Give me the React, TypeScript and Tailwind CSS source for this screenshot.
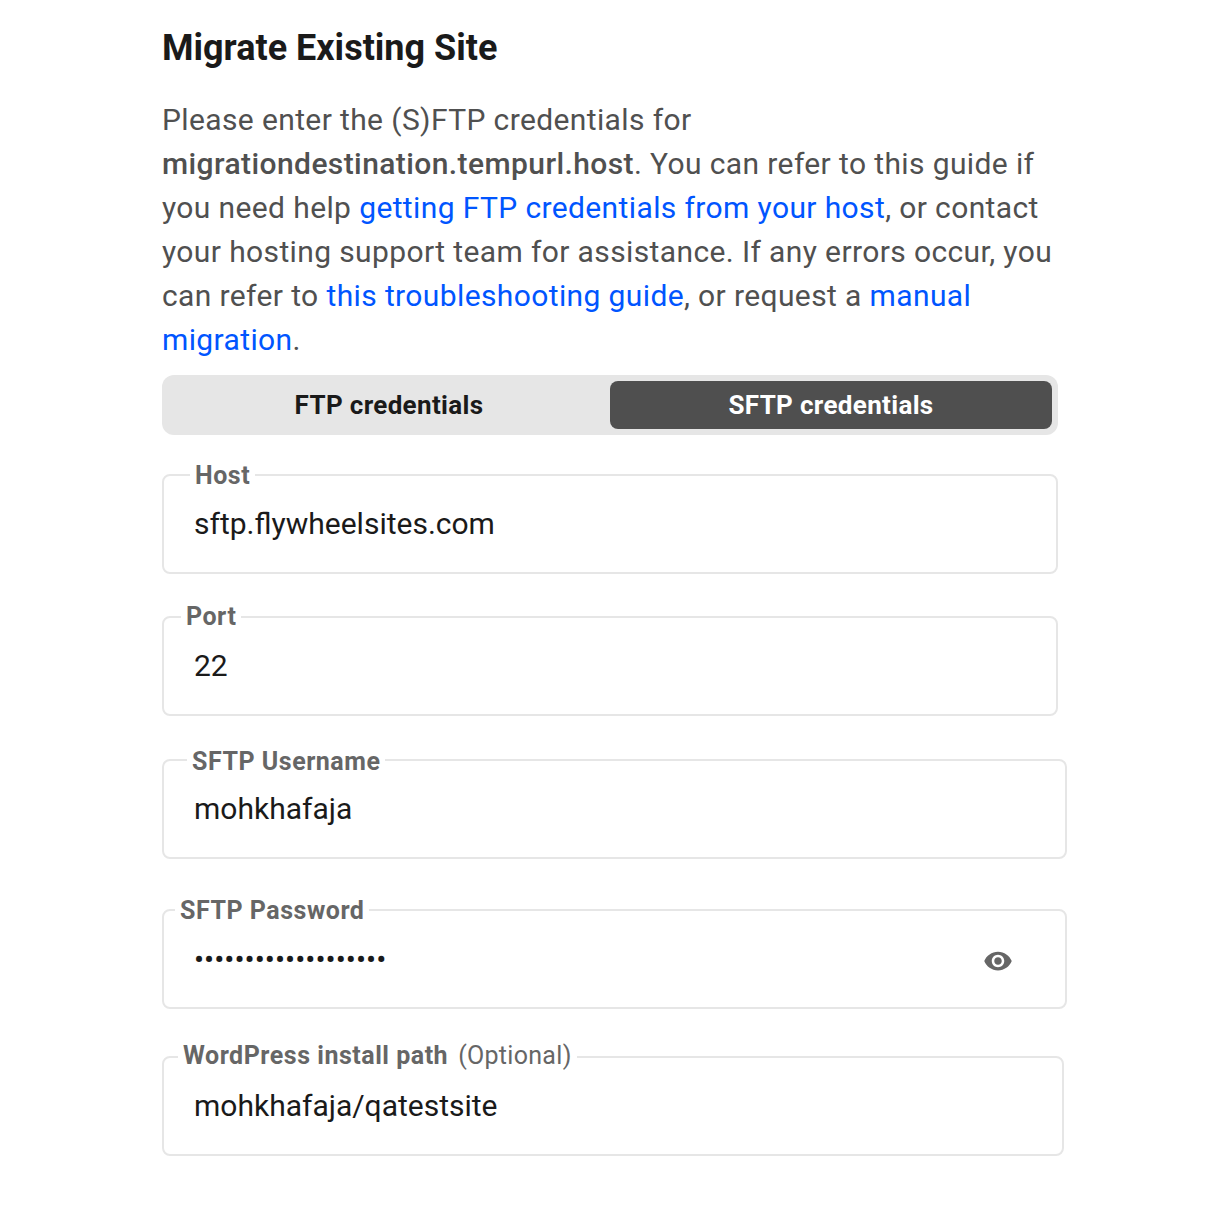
type CampoProps = {
  label: string;
  value: string;
  largura: string;
  recuo: string;
  topo: string;
  ajuste?: string;
  opcional?: boolean;
  senha?: boolean;
};

function Campo({ label, value, largura, recuo, topo, ajuste = "", opcional, senha }: CampoProps) {
  return (
    <fieldset className={`${largura} ${topo} h-[113px] border-2 border-[#e6e6e6] rounded-lg flex items-start`}>
      <legend className={`${recuo} px-[5px] text-[25px] leading-[28px] tracking-[0.52px] text-[#666666] font-bold whitespace-nowrap`}>
        <span className={`inline-block ${ajuste}`}>
          {label}
          {opcional && <span className="font-normal tracking-[0.3px] ml-[10px]">(Optional)</span>}
        </span>
      </legend>
      <div className="flex items-center w-full pl-[30px] pr-[52px] h-[68px]">
        <span className={`flex-1 text-[#1a1a1a] text-[30px] ${senha ? "mt-[2px]" : ""}`}>{value}</span>
        {senha && (
          <svg viewBox="0 0 24 24" className="w-[30px] h-[30px] mt-[6px] fill-[#666666]">
            <path d="M12 4.5C7 4.5 2.73 7.61 1 12c1.73 4.39 6 7.5 11 7.5s9.27-3.11 11-7.5c-1.73-4.39-6-7.5-11-7.5zM12 17c-2.76 0-5-2.24-5-5s2.24-5 5-5 5 2.24 5 5-2.24 5-5 5zm0-8c-1.66 0-3 1.34-3 3s1.34 3 3 3 3-1.34 3-3-1.34-3-3-3z" />
          </svg>
        )}
      </div>
    </fieldset>
  );
}

function App() {
  return (
    <div className="min-h-screen bg-white font-['Roboto',sans-serif] pl-[162px] pt-[26px]">
      <div className="w-[896px]">
        <h1 className="text-[36px] leading-[44px] font-bold text-[#1a1a1a]">Migrate Existing Site</h1>

        <p className="mt-[28px] text-[30px] leading-[44px] tracking-[0.38px] text-[#505050]">
          Please enter the (S)FTP credentials for <strong className="font-medium tracking-[0.41px]">migrationdestination.tempurl.host</strong>. You can refer to this guide if you need help{" "}
          <a className="text-[#0055ff]">getting FTP credentials from your host</a>, or contact your hosting support team for assistance. If any errors occur, you can refer to{" "}
          <a className="text-[#0055ff]">this troubleshooting guide</a>, or request a <a className="text-[#0055ff]">manual migration</a>.
        </p>

        <div className="mt-[13px] h-[60px] bg-[#e6e6e6] rounded-xl p-[6px] flex">
          <div className="flex-1 flex items-center justify-center text-[26px] tracking-[0.33px] font-bold text-[#1a1a1a]">FTP credentials</div>
          <div className="w-[442px] flex items-center justify-center rounded-lg bg-[#4f4f4f] text-[26px] tracking-[0.33px] font-bold text-white">SFTP credentials</div>
        </div>

        <Campo topo="mt-[26px]" largura="w-[896px]" recuo="ml-[26px]" ajuste="translate-y-[1px]" label="Host" value="sftp.flywheelsites.com" />
        <Campo topo="mt-[29px]" largura="w-[896px]" recuo="ml-[17px]" label="Port" value="22" />
        <Campo topo="mt-[30px]" largura="w-[905px]" recuo="ml-[23px]" ajuste="translate-y-[2px]" label="SFTP Username" value="mohkhafaja" />
        <Campo topo="mt-[37px]" largura="w-[905px]" recuo="ml-[11px]" ajuste="translate-y-[1px]" label="SFTP Password" value="•••••••••••••••••••" senha />
        <Campo topo="mt-[34px]" largura="w-[902px]" recuo="ml-[14px]" ajuste="-translate-y-[1px]" label="WordPress install path" value="mohkhafaja/qatestsite" opcional />
      </div>
    </div>
  );
}

export default App;
